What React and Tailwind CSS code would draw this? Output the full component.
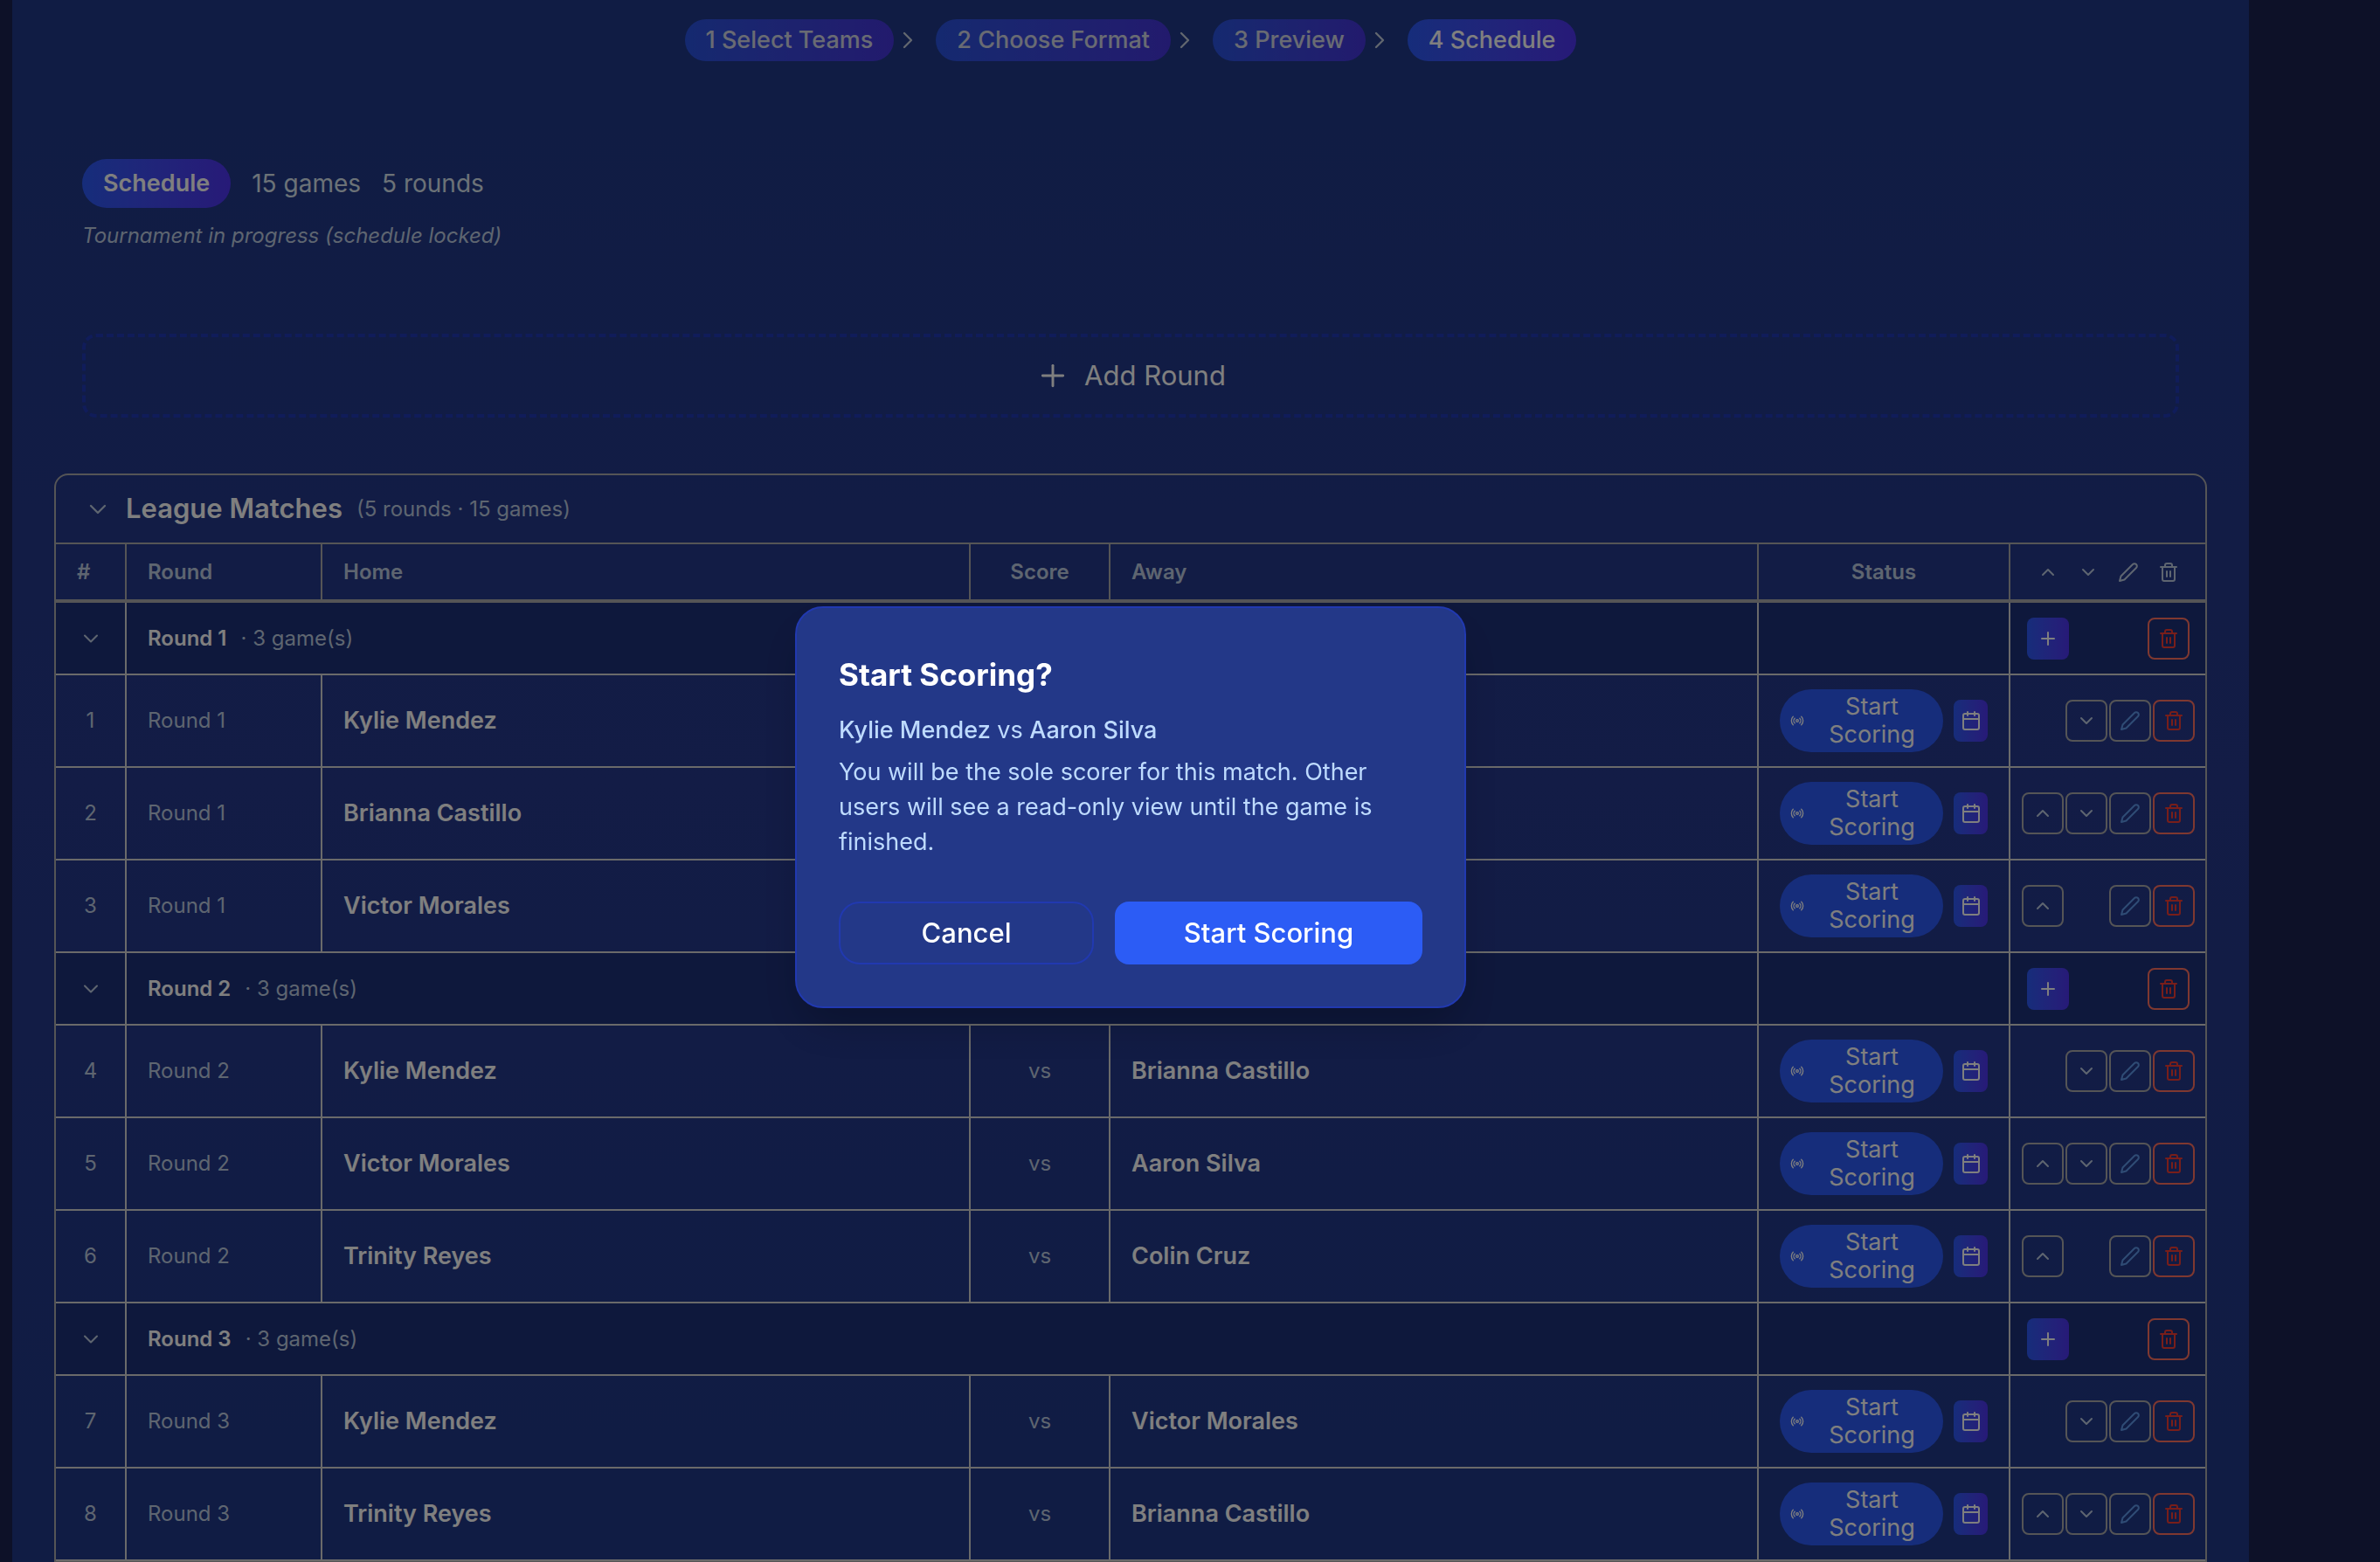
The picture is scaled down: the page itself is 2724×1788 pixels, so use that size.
import React from "react";
import { Calendar, ChevronDown, ChevronRight, ChevronUp, Plus, Radio, Trash2 } from "lucide-react";

const GAMES_PER_ROUND = 3;

const steps = ["1 Select Teams", "2 Choose Format", "3 Preview", "4 Schedule"];

const rounds = [
  {
    name: "Round 1",
    games: [
      { id: 1, home: "Kylie Mendez", away: "Aaron Silva" },
      { id: 2, home: "Brianna Castillo", away: "Colin Cruz" },
      { id: 3, home: "Victor Morales", away: "Trinity Reyes" },
    ],
  },
  {
    name: "Round 2",
    games: [
      { id: 4, home: "Kylie Mendez", away: "Brianna Castillo" },
      { id: 5, home: "Victor Morales", away: "Aaron Silva" },
      { id: 6, home: "Trinity Reyes", away: "Colin Cruz" },
    ],
  },
  {
    name: "Round 3",
    games: [
      { id: 7, home: "Kylie Mendez", away: "Victor Morales" },
      { id: 8, home: "Trinity Reyes", away: "Brianna Castillo" },
    ],
  },
];

function Pencil() {
  return (
    <svg width="24" height="24" viewBox="0 0 24 24" fill="none" stroke="currentColor" strokeWidth="2" strokeLinecap="round" strokeLinejoin="round" aria-hidden="true">
      <path d="M17 3a2.828 2.828 0 1 1 4 4L7.5 20.5 2 22l1.5-5.5L17 3z" />
    </svg>
  );
}

function IconButton({ label, className = "", children }) {
  return (
    <button className={`grid h-12 w-12 place-items-center rounded-lg ${className}`} aria-label={label}>
      {children}
    </button>
  );
}

function StepBar() {
  return (
    <nav className="flex items-center justify-center" aria-label="Setup steps">
      {steps.map((step, index) => {
        const last = index === steps.length - 1;
        return (
          <React.Fragment key={step}>
            <button className={`h-12 rounded-full bg-linear-to-r from-[#2c5af6] to-[#4e34f0] px-6 text-[27px] leading-12 font-medium text-white ${last ? "" : "opacity-80"}`}>{step}</button>
            {!last && <ChevronRight className="mr-4 text-[#c4cede]" size={32} strokeWidth={1.75} />}
          </React.Fragment>
        );
      })}
    </nav>
  );
}

function GroupRow({ round }) {
  return (
    <tr className="h-[83px] bg-[#1d3078]">
      <td className="border-r-2 border-b-2 border-[#d4d4d4]">
        <button className="mx-auto block text-[#bccbe0]" aria-label={`Collapse ${round.name}`}>
          <ChevronDown size={28} strokeWidth={1.75} />
        </button>
      </td>
      <td colSpan={4} className="border-r-2 border-b-2 border-[#d4d4d4] px-6">
        <span className="font-semibold text-white">{round.name}</span>
        <span className="ml-4 text-[#bccbe0]">· {GAMES_PER_ROUND} game(s)</span>
      </td>
      <td className="border-r-2 border-b-2 border-[#d4d4d4]" />
      <td className="border-b-2 border-[#d4d4d4]">
        <div className="mx-auto grid w-[184px] grid-cols-4 justify-items-center">
          <IconButton label="Add game" className="bg-linear-to-r from-[#2c5af6] to-[#4e34f0] text-white">
            <Plus size={24} />
          </IconButton>
          <IconButton label="Delete round" className="col-start-4 border-2 border-[#ff7060] text-[#f03c34]">
            <Trash2 size={24} />
          </IconButton>
        </div>
      </td>
    </tr>
  );
}

function GameRow({ game, round, first, last }) {
  return (
    <tr className="h-[106px]">
      <td className="border-r-2 border-b-2 border-[#d4d4d4] text-center text-[#bccbe0]">{game.id}</td>
      <td className="border-r-2 border-b-2 border-[#d4d4d4] px-6 text-[#bccbe0]">{round}</td>
      <td className="border-r-2 border-b-2 border-[#d4d4d4] px-6 text-[27px] font-semibold text-white">{game.home}</td>
      <td className="border-r-2 border-b-2 border-[#d4d4d4] text-center text-[#bccbe0]">vs</td>
      <td className="border-r-2 border-b-2 border-[#d4d4d4] px-6 text-[27px] font-semibold text-white">{game.away}</td>
      <td className="border-r-2 border-b-2 border-[#d4d4d4] px-6">
        <div className="flex items-center gap-3">
          <button className="flex flex-1 items-center gap-2 rounded-[36px] bg-[#2c5af6] px-3 py-1 text-[27px] leading-8 text-white">
            <Radio className="shrink-0" size={16} />
            <span className="flex-1 text-center">
              Start
              <br />
              Scoring
            </span>
          </button>
          <button className="grid h-12 w-[39px] place-items-center rounded-lg bg-linear-to-r from-[#2c5af6] to-[#4e34f0] text-white" aria-label="Set date">
            <Calendar size={24} />
          </button>
        </div>
      </td>
      <td className="border-b-2 border-[#d4d4d4]">
        <div className="flex justify-center gap-[2px]">
          <IconButton label="Move up" className={`border-2 border-[#aaaaac] text-[#bccbe0] ${first ? "invisible" : ""}`}>
            <ChevronUp size={24} />
          </IconButton>
          <IconButton label="Move down" className={`border-2 border-[#aaaaac] text-[#bccbe0] ${last ? "invisible" : ""}`}>
            <ChevronDown size={24} />
          </IconButton>
          <IconButton label="Edit game" className="border-2 border-[#aaaaac] text-[#5f98ea]">
            <Pencil />
          </IconButton>
          <IconButton label="Delete game" className="border-2 border-[#ff7060] text-[#f03c34]">
            <Trash2 size={24} />
          </IconButton>
        </div>
      </td>
    </tr>
  );
}

function LeagueTable() {
  return (
    <section className="overflow-hidden rounded-t-2xl border-2 border-[#aaaaac]">
      <div className="flex h-[77px] items-center pl-8">
        <button className="text-[#bccbe0]" aria-label="Collapse league matches">
          <ChevronDown size={32} strokeWidth={1.75} />
        </button>
        <h2 className="ml-4 text-[31px] font-semibold text-white">League Matches</h2>
        <span className="ml-4 text-[24px] text-[#bccbe0]">(5 rounds · 15 games)</span>
      </div>
      <table className="w-full table-fixed border-separate border-spacing-0 border-t-2 border-[#aaaaac] text-[24px]">
        <colgroup>
          <col className="w-[81px]" />
          <col className="w-[224px]" />
          <col />
          <col className="w-[160px]" />
          <col />
          <col className="w-[288px]" />
          <col className="w-[223px]" />
        </colgroup>
        <thead>
          <tr className="h-[67px] text-left text-[#bccbe0]">
            <th className="border-r-2 border-b-4 border-[#aaaaac] px-6 font-semibold">#</th>
            <th className="border-r-2 border-b-4 border-[#aaaaac] px-6 font-semibold">Round</th>
            <th className="border-r-2 border-b-4 border-[#aaaaac] px-6 font-semibold">Home</th>
            <th className="border-r-2 border-b-4 border-[#aaaaac] px-6 text-center font-semibold">Score</th>
            <th className="border-r-2 border-b-4 border-[#aaaaac] px-6 font-semibold">Away</th>
            <th className="border-r-2 border-b-4 border-[#aaaaac] px-6 text-center font-semibold">Status</th>
            <th className="border-b-4 border-[#aaaaac]" aria-label="Actions">
              <div className="mx-auto grid w-[184px] grid-cols-4 place-items-center">
                <ChevronUp size={24} />
                <ChevronDown size={24} />
                <Pencil />
                <Trash2 size={24} />
              </div>
            </th>
          </tr>
        </thead>
        <tbody>
          {rounds.map((round) => (
            <React.Fragment key={round.name}>
              <GroupRow round={round} />
              {round.games.map((game, index) => (
                <GameRow key={game.id} game={game} round={round.name} first={index === 0} last={index === GAMES_PER_ROUND - 1} />
              ))}
            </React.Fragment>
          ))}
        </tbody>
      </table>
    </section>
  );
}

function StartScoringDialog() {
  return (
    <div className="fixed inset-0 flex items-center justify-center bg-black/50 pt-[60px] pr-[136px]">
      <div className="w-full max-w-3xl rounded-[32px] border-2 border-[#2139b0] bg-[#233888] p-12 text-[27px] leading-10 text-[#bedbff] shadow-2xl" role="dialog" aria-modal="true" aria-labelledby="dialog-title">
        <h2 id="dialog-title" className="mb-4 text-[35px] leading-14 font-bold text-white">Start Scoring?</h2>
        <p className="mb-2">
          <span className="font-medium">Kylie Mendez</span> vs <span className="font-medium">Aaron Silva</span>
        </p>
        <p>You will be the sole scorer for this match. Other users will see a read-only view until the game is finished.</p>
        <div className="mt-12 flex gap-6 text-[31px] font-medium text-white">
          <button className="h-[72px] flex-1 rounded-3xl border-2 border-[#2139b0]">Cancel</button>
          <button className="h-[72px] w-[352px] rounded-2xl bg-[#2c5cf5]">Start Scoring</button>
        </div>
      </div>
    </div>
  );
}

export default function App() {
  return (
    <div className="h-screen overflow-hidden bg-[#1a2350] pr-[150px] pl-[14px] font-[Inter,sans-serif]">
      <main className="min-h-full bg-linear-to-b from-[#203888] via-[#26388c] to-[#203888] px-12 pt-[22px]">
        <StepBar />
        <header className="px-8 pt-28">
          <div className="flex items-center gap-6 text-[28px] text-[#d8e4ee]">
            <h1 className="h-14 rounded-full bg-linear-to-r from-[#2c5af6] to-[#4e34f0] px-6 text-[27px] leading-14 font-semibold text-white">Schedule</h1>
            <span>15 games</span>
            <span>5 rounds</span>
          </div>
          <p className="mt-4 text-[24px] leading-8 text-[#bccbe0] italic">Tournament in progress (schedule locked)</p>
          <button className="mt-24 flex h-24 w-full items-center justify-center gap-4 rounded-2xl border-4 border-dashed border-[#2039b4] text-[31px] text-white">
            <Plus size={40} strokeWidth={1.75} />
            Add Round
          </button>
        </header>
        <div className="pt-16">
          <LeagueTable />
        </div>
      </main>
      <StartScoringDialog />
    </div>
  );
}
